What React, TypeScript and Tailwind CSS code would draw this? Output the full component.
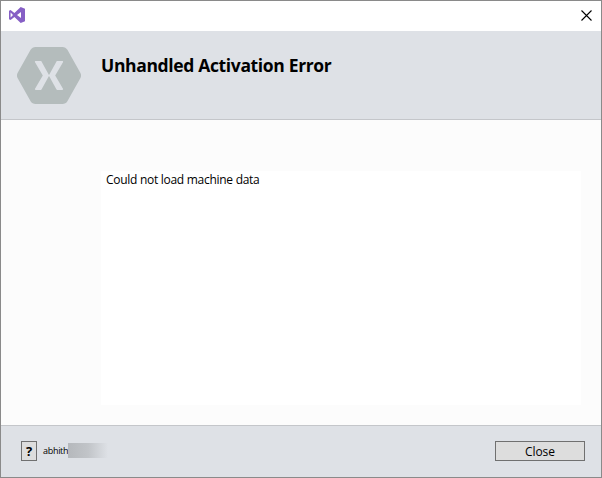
function VisualStudioLogo() {
  return (
    <svg className="block" width="16" height="16" viewBox="0 0 16 16" fill="#865fc5">
      <path
        fillRule="evenodd"
        d="M11.700 0 16 1.700v12.600L11.700 16 5.400 10.100 1.600 13 0 12.200V3.800l1.600-.8 3.800 2.900L11.700 0ZM12 5 8 8l4 3V5ZM1.600 5.600v4.800L4 8 1.600 5.600Z"
      />
    </svg>
  );
}

function XamarinLogo() {
  return (
    <svg className="block" width="64" height="57" viewBox="0 0 64 57">
      <path
        fill="#b4bcbc"
        d="M18.500 0h27c2 0 3.900 1.100 4.900 2.800L63.300 25.700c1 1.700 1 3.900 0 5.600L50.400 54.200c-1 1.700-2.900 2.800-4.900 2.800h-27c-2 0-3.900-1.100-4.900-2.800L.7 31.300c-1-1.700-1-3.900 0-5.600L13.600 2.800C14.600 1.100 16.500 0 18.500 0Z"
      />
      <path
        fill="#dee1e6"
        d="M18.700 14h5.100c.3 0 .6.200.7.400l7.300 13.300h.4l7.300-13.300c.2-.2.400-.4.700-.4h5.100c.6 0 1 .6.700 1.200L38.200 28.500 46 41.800c.3.600-.1 1.200-.7 1.200h-5.100c-.3 0-.5-.2-.7-.4l-7.300-13.300h-.4l-7.300 13.300c-.1.200-.4.400-.7.400h-5.100c-.6 0-1-.6-.7-1.200l7.800-13.300L18 15.200c-.3-.6.100-1.200.7-1.200Z"
      />
    </svg>
  );
}

export default function App() {
  return (
    <div className="flex h-[478px] w-[602px] flex-col border border-[#8a8a8a] bg-[#fcfcfc] font-['Open_Sans','Noto_Sans',sans-serif] text-black">
      <div className="flex h-[30px] shrink-0 items-start justify-between bg-white pt-[6px] pr-[9px] pl-2">
        <VisualStudioLogo />
        <button aria-label="Close window" className="mt-[3px]">
          <svg className="block" width="11" height="11" viewBox="0 0 11 11" stroke="black" strokeWidth="1.1">
            <path d="m.5.500 10 10m0-10-10 10" />
          </svg>
        </button>
      </div>
      <header className="flex h-[89px] shrink-0 items-start border-b border-[#c4c6ca] bg-[#dee1e6] pt-4 pl-4">
        <XamarinLogo />
        <h1 className="ml-5 mt-[6px] whitespace-nowrap text-[17.5px] leading-6 font-bold tracking-[-0.35px]">
          Unhandled Activation Error
        </h1>
      </header>
      <main className="flex grow pt-[51px] pr-5 pb-5 pl-[100px]">
        <div className="grow bg-white pt-px pl-[5px] text-[12px] leading-4 tracking-[-0.28px]">
          Could not load machine data
        </div>
      </main>
      <footer className="flex h-[52px] shrink-0 items-center border-t border-[#c4c6ca] bg-[#dee1e6] pr-4 pb-[2px] pl-5">
        <button className="flex h-5 w-4 items-center justify-center border border-[#707070] bg-[#dddddd] pt-px text-[13px] leading-4 font-bold">
          ?
        </button>
        <span className="ml-[6px] w-[25px] pt-px text-[9px] leading-4 tracking-[-0.3px]">abhith</span>
        <span className="h-[15px] w-10 bg-linear-to-r from-[#b5b8bc] via-[#c1c4c8] to-[#dee1e6]" />
        <button className="ml-auto flex h-5 w-[90px] items-center justify-center border border-[#707070] bg-[#dddddd] pt-[2px] text-[12px] leading-4 tracking-[-0.1px]">
          Close
        </button>
      </footer>
    </div>
  );
}
